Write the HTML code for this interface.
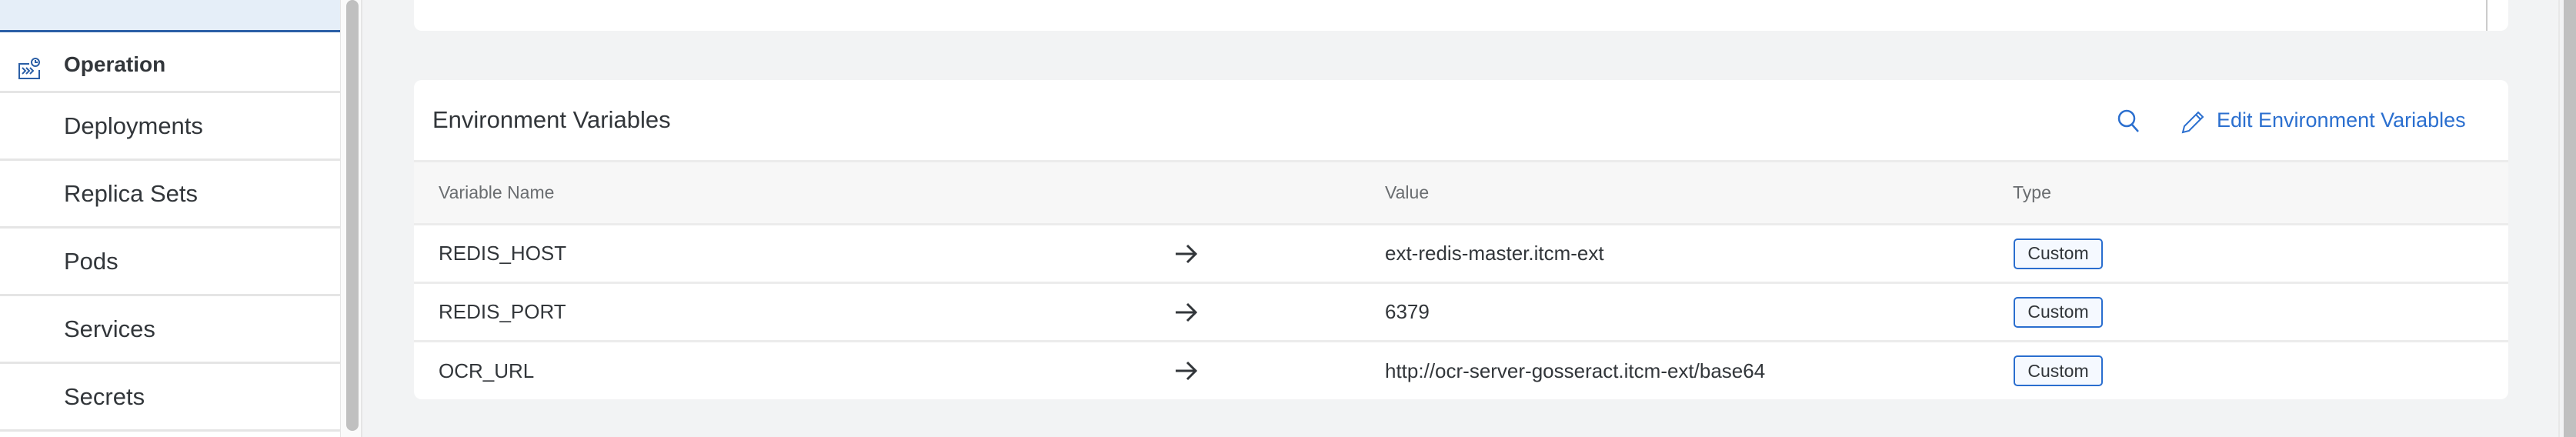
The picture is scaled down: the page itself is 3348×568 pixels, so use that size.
<!DOCTYPE html>
<html><head><meta charset="utf-8"><style>
*{margin:0;padding:0;box-sizing:border-box}
body{width:3348px;height:568px;overflow:hidden;background:#f2f3f4;font-family:"Liberation Sans",sans-serif;position:relative;color:#32363a}
.side{position:absolute;left:0;top:0;width:442px;height:568px;background:#fff}
.sel{position:absolute;left:0;top:0;width:442px;height:42px;background:#e5eef8;border-bottom:3px solid #2b5fa6}
.item{position:absolute;left:0;width:442px;height:88px;border-bottom:3px solid #e5e5e5;font-size:31px;padding-left:83px;display:flex;align-items:center}
.track{position:absolute;left:442px;top:0;width:29px;height:568px;background:#fafafa;border-left:1px solid #e5e5e5;border-right:2px solid #e5e5e5}
.thumb{position:absolute;left:450px;top:0;width:16px;height:560px;background:#c0c0c0;border-radius:8px}
.card{position:absolute;left:538px;width:2722px;background:#fff;border-radius:10px}
.row{position:absolute;left:0;width:2722px;font-size:26px;display:flex;align-items:center}
.row span,.row svg{position:absolute}
.badge{position:absolute;left:2079px;width:116px;height:40px;border:2px solid #2a6ecf;border-radius:5px;background:#f5f9ff;font-size:23px;display:flex;align-items:center;justify-content:center}
</style></head><body>
<div class="side">
<div class="sel"></div>
<svg style="position:absolute;left:24px;top:75px" width="28" height="28" viewBox="0 0 28 28" fill="none" stroke="#2b5fa6" stroke-width="2"><path d="M14 8H1v19h26v-11"/><path d="M5 13l4 4-4 4M10 13l4 4-4 4M15 13l4 4-4 4"/><circle cx="22" cy="6" r="5"/><path d="M22 3v3h3"/></svg>
<div class="item" style="top:50px;height:71px;font-weight:bold;font-size:28px">Operation</div>
<div class="item" style="top:121px">Deployments</div>
<div class="item" style="top:209px">Replica Sets</div>
<div class="item" style="top:297px">Pods</div>
<div class="item" style="top:385px">Services</div>
<div class="item" style="top:473px">Secrets</div>
</div>
<div class="track"></div><div class="thumb"></div>
<div class="card" style="top:-10px;height:50px"></div>
<div style="position:absolute;left:3231px;top:0;width:2px;height:40px;background:#ccc"></div>
<div style="position:absolute;left:3325px;top:0;width:2px;height:568px;background:#e8e8e8"></div>
<div style="position:absolute;left:3332px;top:0;width:16px;height:568px;background:#c0c0c0"></div>
<div class="card" style="top:104px;height:415px;overflow:hidden">
<div style="position:absolute;left:24px;top:34px;font-size:31px">Environment Variables</div>
<svg style="position:absolute;left:2214px;top:38px" width="30" height="32" viewBox="0 0 30 32" fill="none" stroke="#2b6fcf" stroke-width="2.5"><circle cx="12" cy="12" r="10"/><path d="M19 20l8 9"/></svg>
<svg style="position:absolute;left:2297px;top:40px" width="30" height="30" viewBox="0 0 30 30" fill="none" stroke="#2b6fcf" stroke-width="2"><path d="M2 28l2-8L22 2l6 6-18 18z"/><path d="M19 5l6 6"/></svg>
<div style="position:absolute;left:2343px;top:37px;font-size:27px;color:#2b6fcf">Edit Environment Variables</div>
<div style="position:absolute;left:0;top:104px;width:2722px;height:85px;background:#f7f7f7;border-top:3px solid #ececec;border-bottom:3px solid #ececec"></div>
<div class="row" style="top:107px;height:79px;color:#6a6d70;font-size:23px"><span style="left:32px">Variable Name</span><span style="left:1262px">Value</span><span style="left:2078px">Type</span></div>
<div class="row" style="top:189px;height:76px;border-bottom:3px solid #ececec"><span style="left:32px">REDIS_HOST</span><svg style="left:989px" width="30" height="26" viewBox="0 0 30 26" fill="none" stroke="#32363a" stroke-width="3"><path d="M1 13h26M16 2l11 11-11 11"/></svg><span style="left:1262px">ext-redis-master.itcm-ext</span><div class="badge">Custom</div></div>
<div class="row" style="top:265px;height:76px;border-bottom:3px solid #ececec"><span style="left:32px">REDIS_PORT</span><svg style="left:989px" width="30" height="26" viewBox="0 0 30 26" fill="none" stroke="#32363a" stroke-width="3"><path d="M1 13h26M16 2l11 11-11 11"/></svg><span style="left:1262px">6379</span><div class="badge">Custom</div></div>
<div class="row" style="top:341px;height:74px"><span style="left:32px">OCR_URL</span><svg style="left:989px" width="30" height="26" viewBox="0 0 30 26" fill="none" stroke="#32363a" stroke-width="3"><path d="M1 13h26M16 2l11 11-11 11"/></svg><span style="left:1262px">http://ocr-server-gosseract.itcm-ext/base64</span><div class="badge">Custom</div></div>
</div>
</body></html>
